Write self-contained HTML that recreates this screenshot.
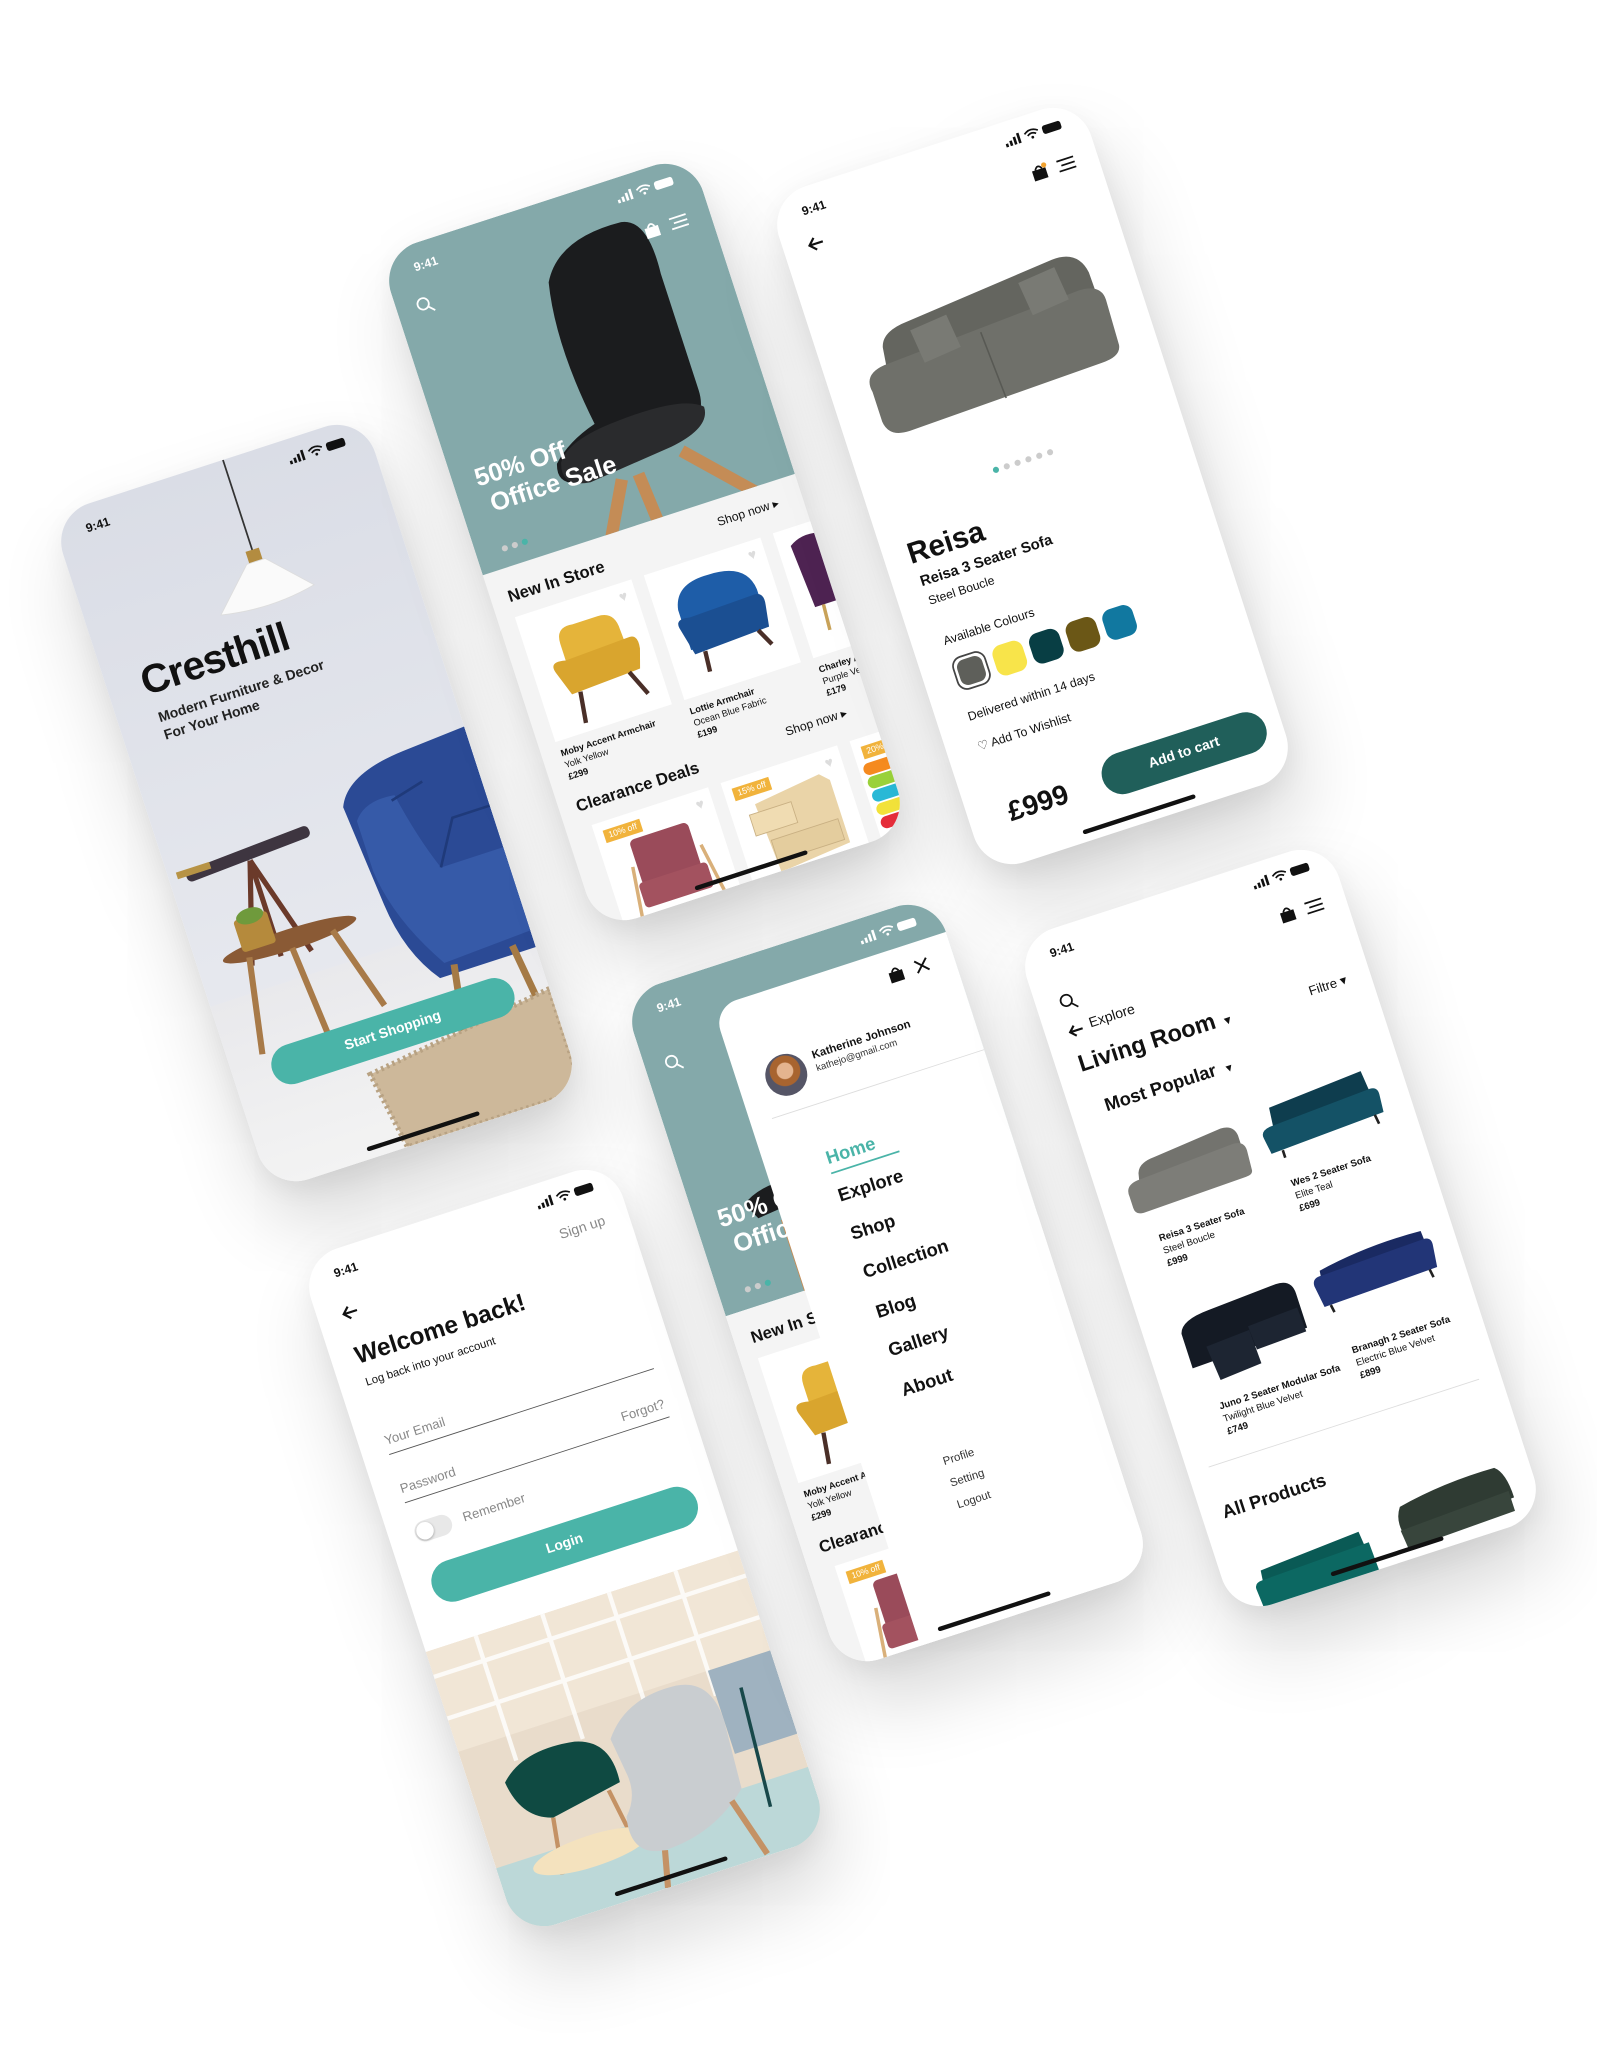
<!DOCTYPE html>
<html><head><meta charset="utf-8">
<style>
*{box-sizing:border-box;margin:0;padding:0}
html,body{width:1597px;height:2048px;background:#fff;overflow:hidden;font-family:"Liberation Sans",sans-serif;color:#111}
.ph{position:absolute;width:375px;height:812px;border-radius:46px;overflow:hidden;background:#fff;transform:rotate(-18deg) scale(.875);box-shadow:0 50px 90px rgba(0,0,0,.16),0 10px 30px rgba(0,0,0,.06)}
.a{position:absolute}
.t941{position:absolute;left:34px;top:18px;font-size:14px;font-weight:bold}
.sb{position:absolute;right:26px;top:16px}
.hi{position:absolute;left:120px;bottom:9px;width:135px;height:5px;border-radius:3px;background:#111}
.b{font-weight:bold}
.card{position:absolute;background:#fff}
.ct{position:absolute;font-size:10.5px;line-height:14px;white-space:nowrap}
.tag{position:absolute;left:10px;top:10px;background:#f1b33c;color:#fff;font-size:10px;padding:2px 5px}
.heart{position:absolute;right:10px;top:8px;color:#ddd;font-size:16px}
.mi{position:absolute;left:165px;font-size:21px;font-weight:bold}
.ml{position:absolute;left:185px;font-size:13px;color:#333}
</style></head><body>

<!-- SPLASH -->
<div class="ph" style="left:129px;top:397px;background:linear-gradient(#dadde6,#e6e8ee 70%,#eeeef0)">
  <div class="a" style="left:0;top:590px;width:375px;height:222px;background:linear-gradient(#e9e9ec,#f3f3f3)"></div>
  <svg class="a" style="left:0;top:0" width="375" height="812" viewBox="0 0 375 812">
    <line x1="207" y1="0" x2="207" y2="110" stroke="#333" stroke-width="2"/>
    <rect x="199" y="108" width="16" height="14" fill="#b38c40"/>
    <path d="M196 122 L218 122 L262 168 Q207 180 150 168Z" fill="#fafafa" stroke="#ddd"/>
    <rect x="20" y="430" width="150" height="14" rx="6" fill="#3e3540" transform="rotate(-3 95 437)"/>
    <rect x="10" y="432" width="40" height="8" fill="#b79345"/>
    <path d="M95 445 L60 560 M95 445 L130 565 M95 445 L95 560" stroke="#6b3a2a" stroke-width="6"/>
    <ellipse cx="110" cy="545" rx="80" ry="12" fill="#8a5a35"/>
    <path d="M60 550 L40 660 M160 550 L190 650 M110 555 L120 680" stroke="#a87a48" stroke-width="7"/>
    <rect x="55" y="505" width="40" height="38" rx="4" fill="#b58a3c"/>
    <ellipse cx="75" cy="505" rx="16" ry="9" fill="#6f9a3c"/>
    <path d="M215 420 Q230 385 300 380 L375 375 L375 640 L260 640 Q230 600 225 540 Z" fill="#2b4a95"/>
    <path d="M225 440 Q240 420 275 425 Q285 480 300 520 L375 520 L375 620 L270 625 Q230 560 225 500Z" fill="#365aa8"/>
    <path d="M270 430 L310 420 M300 520 L330 470 L375 470" stroke="#1f3a7a" stroke-width="3" fill="none"/>
    <path d="M280 630 L265 720 M350 630 L360 710" stroke="#a57a45" stroke-width="8"/>
    <path d="M150 720 L375 690 L375 812 L165 812Z" fill="#cdb89a"/>
    <path d="M150 720 L375 690 L375 812 L165 812Z" fill="none" stroke="#b8a283" stroke-dasharray="3 4" stroke-width="6"/>
  </svg>
  <div class="t941">9:41</div>
  <div class="sb"><svg width="70" height="14"><rect x="0" y="9" width="3" height="4" fill="#111"/><rect x="5" y="7" width="3" height="6" fill="#111"/><rect x="10" y="4" width="3" height="9" fill="#111"/><rect x="15" y="1" width="3" height="12" fill="#111"/><path d="M24 5 Q32 -1 40 5 M27 8 Q32 4 37 8" stroke="#111" stroke-width="2" fill="none"/><circle cx="32" cy="11" r="1.6" fill="#111"/><rect x="45" y="2" width="22" height="10" rx="3" fill="#111"/></svg></div>
  <div class="a b" style="left:40px;top:186px;font-size:46px;letter-spacing:-1px">Cresthill</div>
  <div class="a" style="left:46px;top:248px;font-size:16px;line-height:21px;font-weight:bold;color:#222">Modern Furniture &amp; Decor<br>For Your Home</div>
  <div class="a" style="left:45px;top:658px;width:290px;height:46px;border-radius:23px;background:#4ab4a8;color:#fff;text-align:center;line-height:46px;font-size:16px;font-weight:bold">Start Shopping</div>
  <div class="hi"></div>
</div>

<!-- HOME -->
<div class="ph" style="left:457px;top:136px;background:#f4f4f4">
  <div class="a" style="left:0;top:0;width:375px;height:385px;background:#84a9aa"></div>
  <svg class="a" style="left:0;top:0" width="375" height="385">
    <path d="M185 330 L150 395 M205 330 L210 395 M260 320 L330 395" stroke="#c48c56" stroke-width="14"/>
    <path d="M175 90 Q200 45 275 50 Q305 55 300 120 Q300 200 300 260 Q300 300 250 310 L150 320 Q110 318 120 290 Q140 270 175 260 Q160 160 175 90Z" fill="#1b1c1e"/>
    <path d="M125 290 Q140 268 200 265 Q280 260 300 280 Q300 305 250 312 L150 322 Q115 318 125 290Z" fill="#2a2b2d"/>
  </svg>
  <div class="t941" style="color:#fff">9:41</div>
  <div class="sb"><svg width="70" height="14"><rect x="0" y="9" width="3" height="4" fill="#fff"/><rect x="5" y="7" width="3" height="6" fill="#fff"/><rect x="10" y="4" width="3" height="9" fill="#fff"/><rect x="15" y="1" width="3" height="12" fill="#fff"/><path d="M24 5 Q32 -1 40 5 M27 8 Q32 4 37 8" stroke="#fff" stroke-width="2" fill="none"/><circle cx="32" cy="11" r="1.6" fill="#fff"/><rect x="45" y="2" width="22" height="10" rx="3" fill="#fff"/></svg></div>
  <svg class="a" style="left:22px;top:60px" width="22" height="22"><circle cx="9" cy="9" r="6.5" stroke="#fff" stroke-width="2" fill="none"/><path d="M14 14 L20 20" stroke="#fff" stroke-width="2"/></svg>
  <svg class="a" style="left:296px;top:58px" width="60" height="22"><path d="M2 8 L18 8 L18 20 L2 20Z" fill="#fff"/><path d="M6 8 Q10 1 14 8" stroke="#fff" stroke-width="2" fill="none"/><path d="M32 6 H52 M36 12 H52 M32 18 H52" stroke="#fff" stroke-width="2"/></svg>
  <div class="a b" style="left:26px;top:262px;color:#fff;font-size:29px;line-height:33px">50% Off<br>&nbsp;Office Sale</div>
  <div class="a" style="left:30px;top:354px"><span style="display:inline-block;width:7px;height:7px;border-radius:4px;background:#ccc;margin-right:5px"></span><span style="display:inline-block;width:7px;height:7px;border-radius:4px;background:#ccc;margin-right:5px"></span><span style="display:inline-block;width:7px;height:7px;border-radius:4px;background:#4ab4a8"></span></div>
  <div class="a b" style="left:20px;top:408px;font-size:19px">New In Store</div>
  <div class="a" style="right:28px;top:402px;font-size:14px">Shop now ▸</div>
  <div class="card" style="left:20px;top:442px;width:140px;height:150px"><svg width="140" height="150"><path d="M40 45 Q40 25 60 28 L90 28 Q110 28 110 50 L112 90 L40 95Z" fill="#e5b43a"/><path d="M25 75 Q20 60 40 65 L115 62 Q128 60 125 78 L118 100 L35 104Z" fill="#d9a52e"/><path d="M45 104 L40 140 M105 100 L118 130" stroke="#4a2f28" stroke-width="5"/></svg><div class="heart">♥</div></div>
  <div class="card" style="left:175px;top:442px;width:140px;height:150px"><svg width="140" height="150"><path d="M25 50 Q30 20 70 22 Q115 22 118 55 L118 95 L25 98Z" fill="#1e5da8"/><path d="M20 70 Q18 58 35 62 L110 60 Q125 58 122 75 L118 100 L28 104Z" fill="#1b4f92"/><path d="M40 104 L38 128 M105 100 L115 120" stroke="#4a2f28" stroke-width="5"/></svg><div class="heart">♥</div></div>
  <div class="card" style="left:330px;top:442px;width:140px;height:150px"><svg width="60" height="150"><path d="M15 20 Q30 10 50 15 L60 20 L60 95 L20 95Z" fill="#4e2352"/><path d="M30 95 L28 125" stroke="#c9a35a" stroke-width="4"/></svg></div>
  <div class="ct" style="left:22px;top:600px"><b>Moby Accent Armchair</b><br>Yolk Yellow<br><b>£299</b></div>
  <div class="ct" style="left:177px;top:600px"><b>Lottie Armchair</b><br>Ocean Blue Fabric<br><b>£199</b></div>
  <div class="ct" style="left:332px;top:600px"><b>Charley Acc</b><br>Purple Velve<br><b>£179</b></div>
  <div class="a b" style="left:20px;top:660px;font-size:19px">Clearance Deals</div>
  <div class="a" style="right:28px;top:654px;font-size:14px">Shop now ▸</div>
  <div class="card" style="left:30px;top:695px;width:140px;height:150px"><svg width="140" height="150"><rect x="35" y="30" width="70" height="55" rx="6" fill="#9a4b5a"/><rect x="30" y="80" width="82" height="30" rx="5" fill="#a3525f"/><path d="M30 60 L20 140 M112 60 L125 140" stroke="#d9b07a" stroke-width="4"/></svg><div class="tag">10% off</div><div class="heart">♥</div></div>
  <div class="card" style="left:185px;top:695px;width:140px;height:150px"><svg width="140" height="150"><path d="M30 35 L110 25 L120 35 L120 110 L35 118Z" fill="#ead4a8"/><rect x="20" y="45" width="50" height="25" fill="#f0dcb2" stroke="#c9b083"/><rect x="35" y="80" width="80" height="25" fill="#e4cd9e" stroke="#c9b083"/></svg><div class="tag">15% off</div><div class="heart">♥</div></div>
  <div class="card" style="left:340px;top:695px;width:140px;height:150px"><svg width="40" height="150"><rect x="5" y="30" width="40" height="14" rx="7" fill="#f58a1f"/><rect x="5" y="46" width="40" height="14" rx="7" fill="#9ad13a"/><rect x="5" y="62" width="40" height="14" rx="7" fill="#29b8d6"/><rect x="5" y="78" width="40" height="14" rx="7" fill="#f2e23a"/><rect x="5" y="94" width="40" height="14" rx="7" fill="#e52d3a"/></svg><div class="tag">20% off</div></div>
  <div class="hi"></div>
</div>

<!-- PRODUCT -->
<div class="ph" style="left:845px;top:80px">
  <div class="t941">9:41</div>
  <div class="sb"><svg width="70" height="14"><rect x="0" y="9" width="3" height="4" fill="#111"/><rect x="5" y="7" width="3" height="6" fill="#111"/><rect x="10" y="4" width="3" height="9" fill="#111"/><rect x="15" y="1" width="3" height="12" fill="#111"/><path d="M24 5 Q32 -1 40 5 M27 8 Q32 4 37 8" stroke="#111" stroke-width="2" fill="none"/><circle cx="32" cy="11" r="1.6" fill="#111"/><rect x="45" y="2" width="22" height="10" rx="3" fill="#111"/></svg></div>
  <svg class="a" style="left:26px;top:56px" width="24" height="20"><path d="M20 10 H4 M11 3 L4 10 L11 17" stroke="#111" stroke-width="2.5" fill="none"/></svg>
  <svg class="a" style="left:296px;top:56px" width="60" height="22"><path d="M2 8 L18 8 L18 20 L2 20Z" fill="#111"/><path d="M6 8 Q10 1 14 8" stroke="#111" stroke-width="2" fill="none"/><circle cx="17" cy="5" r="3" fill="#f1a230"/><path d="M32 6 H52 M36 12 H52 M32 18 H52" stroke="#111" stroke-width="2"/></svg>
  <svg class="a" style="left:35px;top:140px" width="310" height="170" viewBox="0 0 340 190"><path d="M40 70 Q45 50 80 48 L280 30 Q315 28 320 60 L322 140 L30 150Z" fill="#64655f"/><path d="M10 120 Q5 95 35 92 L300 78 Q330 78 330 100 L328 160 Q326 175 300 175 L40 182 Q12 182 10 160Z" fill="#6f706a"/><path d="M80 60 L130 55 L135 100 L85 105Z M230 45 L280 40 L285 85 L235 90Z" fill="#797a74"/><path d="M165 90 L170 180" stroke="#585954" stroke-width="2"/></svg>
  <div class="a" style="left:150px;top:366px"><span style="display:inline-block;width:7px;height:7px;border-radius:4px;background:#4ab4a8;margin-right:6px"></span><span style="display:inline-block;width:7px;height:7px;border-radius:4px;background:#ccc;margin-right:6px"></span><span style="display:inline-block;width:7px;height:7px;border-radius:4px;background:#ccc;margin-right:6px"></span><span style="display:inline-block;width:7px;height:7px;border-radius:4px;background:#ccc;margin-right:6px"></span><span style="display:inline-block;width:7px;height:7px;border-radius:4px;background:#ccc;margin-right:6px"></span><span style="display:inline-block;width:7px;height:7px;border-radius:4px;background:#ccc"></span></div>
  <div class="a b" style="left:28px;top:418px;font-size:34px">Reisa</div>
  <div class="a b" style="left:32px;top:461px;font-size:17px">Reisa 3 Seater Sofa</div>
  <div class="a" style="left:34px;top:486px;font-size:14px">Steel Boucle</div>
  <div class="a" style="left:36px;top:535px;font-size:14px">Available Colours</div>
  <div class="a" style="left:36px;top:565px;width:40px;height:40px;border-radius:12px;border:2px solid #444;padding:3px"><div style="width:100%;height:100%;border-radius:9px;background:#5e5f5a"></div></div>
  <div class="a" style="left:84px;top:567px;width:36px;height:36px;border-radius:11px;background:#f8e44a"></div>
  <div class="a" style="left:128px;top:567px;width:36px;height:36px;border-radius:11px;background:#083e44"></div>
  <div class="a" style="left:172px;top:567px;width:36px;height:36px;border-radius:11px;background:#6b5716"></div>
  <div class="a" style="left:216px;top:567px;width:36px;height:36px;border-radius:11px;background:#1178a0"></div>
  <div class="a" style="left:36px;top:626px;font-size:14px">Delivered within 14 days</div>
  <div class="a" style="left:36px;top:662px;font-size:14px">♡ Add To Wishlist</div>
  <div class="a b" style="left:46px;top:734px;font-size:32px">£999</div>
  <div class="a" style="left:160px;top:726px;width:196px;height:48px;border-radius:24px;background:#205f5a;color:#fff;text-align:center;line-height:48px;font-size:16px;font-weight:bold">Add to cart</div>
  <div class="hi"></div>
</div>

<!-- LOGIN -->
<div class="ph" style="left:377px;top:1142px">
  <div class="t941">9:41</div>
  <div class="sb"><svg width="70" height="14"><rect x="0" y="9" width="3" height="4" fill="#111"/><rect x="5" y="7" width="3" height="6" fill="#111"/><rect x="10" y="4" width="3" height="9" fill="#111"/><rect x="15" y="1" width="3" height="12" fill="#111"/><path d="M24 5 Q32 -1 40 5 M27 8 Q32 4 37 8" stroke="#111" stroke-width="2" fill="none"/><circle cx="32" cy="11" r="1.6" fill="#111"/><rect x="45" y="2" width="22" height="10" rx="3" fill="#111"/></svg></div>
  <div class="a" style="right:28px;top:56px;font-size:16px;color:#888">Sign up</div>
  <svg class="a" style="left:26px;top:64px" width="24" height="20"><path d="M20 10 H4 M11 3 L4 10 L11 17" stroke="#111" stroke-width="2.5" fill="none"/></svg>
  <div class="a b" style="left:28px;top:108px;font-size:28px">Welcome back!</div>
  <div class="a" style="left:30px;top:148px;font-size:13px">Log back into your account</div>
  <div class="a" style="left:30px;top:218px;font-size:15px;color:#888">Your Email</div>
  <div class="a" style="left:30px;top:242px;width:318px;height:1px;background:#555"></div>
  <div class="a" style="left:30px;top:276px;font-size:15px;color:#888">Password</div>
  <div class="a" style="right:28px;top:276px;font-size:15px;color:#888">Forgot?</div>
  <div class="a" style="left:30px;top:300px;width:318px;height:1px;background:#555"></div>
  <div class="a" style="left:30px;top:326px;width:44px;height:24px;border-radius:12px;background:#e8e8e8"><div style="margin:2px;width:20px;height:20px;border-radius:10px;background:#fff;box-shadow:0 1px 3px rgba(0,0,0,.3)"></div></div>
  <div class="a" style="left:88px;top:329px;font-size:15px;color:#888">Remember</div>
  <div class="a" style="left:30px;top:378px;width:318px;height:48px;border-radius:24px;background:#4ab4a8;color:#fff;text-align:center;line-height:48px;font-size:16px;font-weight:bold">Login</div>
  <svg class="a" style="left:0;top:470px" width="375" height="342" viewBox="0 0 375 342">
    <rect width="375" height="342" fill="#e9dccb"/>
    <rect x="0" y="0" width="375" height="120" fill="#f1e6d6"/>
    <path d="M0 30 H375 M0 80 H375 M60 0 V150 M140 0 V150 M220 0 V150 M300 0 V150" stroke="#fff" stroke-width="5" opacity=".8"/>
    <rect x="0" y="260" width="375" height="82" fill="#bcd8d8"/>
    <rect x="300" y="120" width="75" height="100" fill="#9fb2c0"/>
    <path d="M40 170 Q70 140 130 150 Q170 160 165 210 L80 225 Q45 215 40 170Z" fill="#0f4a42"/>
    <path d="M80 225 L70 290 M150 215 L160 280" stroke="#c49265" stroke-width="5"/>
    <ellipse cx="110" cy="275" rx="70" ry="18" fill="#f4e2be"/>
    <path d="M170 160 Q200 120 260 125 Q300 130 300 180 L295 260 Q250 300 190 300 Q150 295 160 250 Q180 230 175 200Z" fill="#c9cdd0"/>
    <path d="M190 300 L180 342 M280 270 L300 340" stroke="#c49265" stroke-width="7"/>
    <path d="M330 150 L320 290" stroke="#18484a" stroke-width="4"/>
  </svg>
  <div class="hi"></div>
</div>

<!-- MENU -->
<div class="ph" style="left:700px;top:877px;background:#fff">
  <div class="a" style="left:0;top:0;width:375px;height:385px;background:#84a9aa"></div>
  <div class="t941" style="color:#fff">9:41</div>
  <div class="sb"><svg width="70" height="14"><rect x="0" y="9" width="3" height="4" fill="#fff"/><rect x="5" y="7" width="3" height="6" fill="#fff"/><rect x="10" y="4" width="3" height="9" fill="#fff"/><rect x="15" y="1" width="3" height="12" fill="#fff"/><path d="M24 5 Q32 -1 40 5 M27 8 Q32 4 37 8" stroke="#fff" stroke-width="2" fill="none"/><circle cx="32" cy="11" r="1.6" fill="#fff"/><rect x="45" y="2" width="22" height="10" rx="3" fill="#fff"/></svg></div>
  <svg class="a" style="left:22px;top:80px" width="22" height="22"><circle cx="9" cy="9" r="6.5" stroke="#fff" stroke-width="2" fill="none"/><path d="M14 14 L20 20" stroke="#fff" stroke-width="2"/></svg>
  <svg class="a" style="left:0;top:0" width="375" height="400"><path d="M60 270 Q80 255 120 258 L120 285 L70 290Z" fill="#1b1c1e"/><path d="M100 300 L100 395" stroke="#c48c56" stroke-width="12"/></svg>
  <div class="a b" style="left:26px;top:262px;color:#fff;font-size:29px;line-height:33px">50% Off<br>&nbsp;Office Sale</div>
  <div class="a" style="left:30px;top:354px"><span style="display:inline-block;width:7px;height:7px;border-radius:4px;background:#ccc;margin-right:5px"></span><span style="display:inline-block;width:7px;height:7px;border-radius:4px;background:#ccc;margin-right:5px"></span><span style="display:inline-block;width:7px;height:7px;border-radius:4px;background:#4ab4a8"></span></div>
  <div class="a" style="left:0;top:385px;width:375px;height:427px;background:#f4f4f4"></div>
  <div class="a b" style="left:20px;top:408px;font-size:19px">New In Store</div>
  <div class="card" style="left:20px;top:442px;width:140px;height:150px"><svg width="140" height="150"><path d="M40 45 Q40 25 60 28 L90 28 Q110 28 110 50 L112 90 L40 95Z" fill="#e5b43a"/><path d="M25 75 Q20 60 40 65 L115 62 Q128 60 125 78 L118 100 L35 104Z" fill="#d9a52e"/><path d="M45 104 L40 140" stroke="#4a2f28" stroke-width="5"/></svg></div>
  <div class="ct" style="left:22px;top:600px"><b>Moby Accent Armchair</b><br>Yolk Yellow<br><b>£299</b></div>
  <div class="a b" style="left:20px;top:660px;font-size:19px">Clearance Deals</div>
  <div class="card" style="left:30px;top:695px;width:140px;height:150px"><svg width="140" height="150"><rect x="35" y="30" width="70" height="55" rx="6" fill="#9a4b5a"/><rect x="30" y="80" width="82" height="30" rx="5" fill="#a3525f"/><path d="M30 60 L20 140" stroke="#d9b07a" stroke-width="4"/></svg><div class="tag">10% off</div></div>
  <div class="a" style="left:95px;top:45px;width:300px;height:780px;background:#fff;border-radius:28px 0 0 0"></div>
  <svg class="a" style="left:296px;top:62px" width="60" height="22"><path d="M2 8 L18 8 L18 20 L2 20Z" fill="#111"/><path d="M6 8 Q10 1 14 8" stroke="#111" stroke-width="2" fill="none"/><path d="M34 4 L48 18 M48 4 L34 18" stroke="#111" stroke-width="2.2"/></svg>
  <div class="a" style="left:127px;top:120px;width:48px;height:48px;border-radius:24px;background:radial-gradient(circle at 50% 40%,#e4b48f 0 9px,#a8642f 10px 17px,#556 18px)"></div>
  <div class="a b" style="left:186px;top:124px;font-size:13px">Katherine Johnson</div>
  <div class="a" style="left:186px;top:142px;font-size:11px;color:#333">kathejo@gmail.com</div>
  <div class="a" style="left:120px;top:186px;width:255px;height:1px;background:#ddd"></div>
  <div class="mi" style="top:238px;color:#4ab4a8">Home</div>
  <div class="a" style="left:165px;top:266px;width:82px;height:2px;background:#4ab4a8"></div>
  <div class="mi" style="top:283px">Explore</div>
  <div class="mi" style="top:329px">Shop</div>
  <div class="mi" style="top:375px">Collection</div>
  <div class="mi" style="top:423px">Blog</div>
  <div class="mi" style="top:469px">Gallery</div>
  <div class="mi" style="top:517px">About</div>
  <div class="ml" style="top:612px">Profile</div>
  <div class="ml" style="top:638px">Setting</div>
  <div class="ml" style="top:664px">Logout</div>
  <div class="hi"></div>
</div>

<!-- EXPLORE -->
<div class="ph" style="left:1093px;top:822px">
  <div class="t941">9:41</div>
  <div class="sb"><svg width="70" height="14"><rect x="0" y="9" width="3" height="4" fill="#111"/><rect x="5" y="7" width="3" height="6" fill="#111"/><rect x="10" y="4" width="3" height="9" fill="#111"/><rect x="15" y="1" width="3" height="12" fill="#111"/><path d="M24 5 Q32 -1 40 5 M27 8 Q32 4 37 8" stroke="#111" stroke-width="2" fill="none"/><circle cx="32" cy="11" r="1.6" fill="#111"/><rect x="45" y="2" width="22" height="10" rx="3" fill="#111"/></svg></div>
  <svg class="a" style="left:296px;top:56px" width="60" height="22"><path d="M2 8 L18 8 L18 20 L2 20Z" fill="#111"/><path d="M6 8 Q10 1 14 8" stroke="#111" stroke-width="2" fill="none"/><path d="M32 6 H52 M36 12 H52 M32 18 H52" stroke="#111" stroke-width="2"/></svg>
  <svg class="a" style="left:26px;top:74px" width="22" height="22"><circle cx="9" cy="9" r="6.5" stroke="#111" stroke-width="2" fill="none"/><path d="M14 14 L20 20" stroke="#111" stroke-width="2"/></svg>
  <div class="a" style="right:28px;top:150px;font-size:15px">Filtre ▾</div>
  <svg class="a" style="left:24px;top:110px" width="22" height="18"><path d="M19 9 H4 M10 3 L4 9 L10 15" stroke="#111" stroke-width="2.5" fill="none"/></svg>
  <div class="a" style="left:52px;top:108px;font-size:16px">Explore</div>
  <div class="a b" style="left:26px;top:142px;font-size:27px">Living Room <span style="font-size:13px">▼</span></div>
  <div class="a b" style="left:40px;top:200px;font-size:21px">Most Popular <span style="font-size:12px">&nbsp;▼</span></div>
  <svg class="a" style="left:30px;top:265px" width="150" height="85" viewBox="0 0 200 110"><path d="M30 40 Q35 25 60 24 L170 14 Q190 14 192 32 L192 80 L20 85Z" fill="#73736e"/><path d="M6 70 Q4 52 25 50 L180 42 Q198 42 198 58 L196 88 Q196 96 184 96 L20 100 Q6 100 6 88Z" fill="#7d7d78"/></svg>
  <svg class="a" style="left:195px;top:255px" width="150" height="85" viewBox="0 0 200 110"><path d="M30 20 L180 10 L185 60 L25 70Z" fill="#0e3d4e"/><path d="M8 62 Q6 50 22 48 L185 40 Q198 40 196 55 L194 80 L12 88Z" fill="#145266"/><path d="M30 88 L30 100 M180 80 L182 95" stroke="#222" stroke-width="4"/></svg>
  <div class="ct" style="left:52px;top:368px;font-size:11px;line-height:15px"><b>Reisa 3 Seater Sofa</b><br>Steel Boucle<br><b>£999</b></div>
  <div class="ct" style="left:215px;top:355px;font-size:11px;line-height:15px"><b>Wes 2 Seater Sofa</b><br>Elite Teal<br><b>£699</b></div>
  <svg class="a" style="left:35px;top:455px" width="150" height="100" viewBox="0 0 200 130"><path d="M10 40 Q15 20 60 18 L170 12 Q195 12 195 35 L195 90 L10 95Z" fill="#141a24"/><path d="M40 70 L110 66 L112 120 L45 125Z" fill="#1d2532"/><path d="M110 60 L190 56 L192 95 L112 98Z" fill="#1d2532"/></svg>
  <svg class="a" style="left:200px;top:445px" width="150" height="80" viewBox="0 0 200 100"><path d="M20 25 Q100 10 185 15 L188 60 L15 65Z" fill="#1a2a62"/><path d="M5 45 Q5 32 20 33 L185 28 Q198 28 196 42 L192 75 L10 80Z" fill="#223577"/><path d="M20 80 L22 92 M180 75 L182 88" stroke="#222" stroke-width="4"/></svg>
  <div class="ct" style="left:58px;top:572px;font-size:11px;line-height:15px"><b>Juno 2 Seater Modular Sofa</b><br>Twilight Blue Velvet<br><b>£749</b></div>
  <div class="ct" style="left:222px;top:558px;font-size:11px;line-height:15px"><b>Branagh 2 Seater Sofa</b><br>Electric Blue Velvet<br><b>£899</b></div>
  <div class="a" style="left:25px;top:640px;width:325px;height:1px;background:#ddd"></div>
  <div class="a b" style="left:24px;top:684px;font-size:21px">All Products</div>
  <svg class="a" style="left:30px;top:755px" width="150" height="70" viewBox="0 0 200 90"><path d="M20 20 L180 10 L185 60 L15 65Z" fill="#0a5a55"/><path d="M5 45 Q5 35 18 35 L190 30 L192 80 L8 85Z" fill="#0c6862"/></svg>
  <svg class="a" style="left:200px;top:735px" width="150" height="70" viewBox="0 0 200 90"><path d="M25 20 Q100 5 180 8 Q195 20 195 60 L20 70 Q10 40 25 20Z" fill="#2f3b33"/><path d="M15 55 L190 48 L190 80 L18 85Z" fill="#38453c"/></svg>
  <div class="hi"></div>
</div>

</body></html>
